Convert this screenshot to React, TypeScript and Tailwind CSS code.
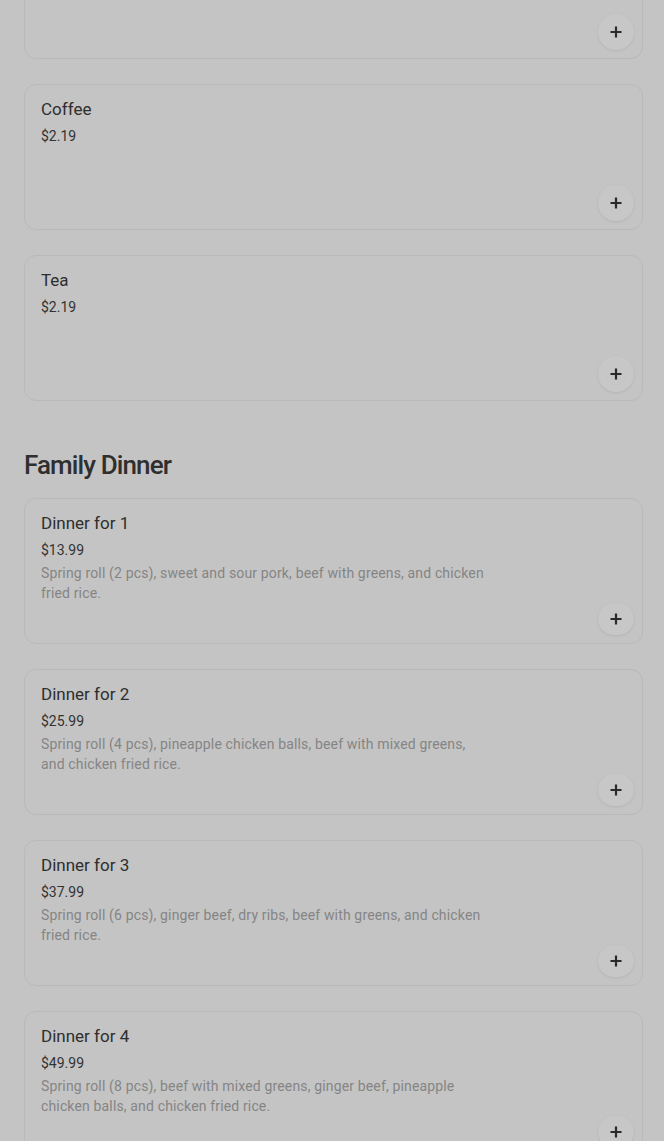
import React from "react";

type Item = { name: string; price: string; desc?: string };

const drinks: Item[] = [
  { name: "", price: "" },
  { name: "Coffee", price: "$2.19" },
  { name: "Tea", price: "$2.19" },
];

const family: Item[] = [
  { name: "Dinner for 1", price: "$13.99", desc: "Spring roll (2 pcs), sweet and sour pork, beef with greens, and chicken fried rice." },
  { name: "Dinner for 2", price: "$25.99", desc: "Spring roll (4 pcs), pineapple chicken balls, beef with mixed greens, and chicken fried rice." },
  { name: "Dinner for 3", price: "$37.99", desc: "Spring roll (6 pcs), ginger beef, dry ribs, beef with greens, and chicken fried rice." },
  { name: "Dinner for 4", price: "$49.99", desc: "Spring roll (8 pcs), beef with mixed greens, ginger beef, pineapple chicken balls, and chicken fried rice." },
];

function Plus() {
  return (
    <svg width="14" height="14" viewBox="0 0 14 14" fill="none">
      <path d="M7 1.5v11M1.5 7h11" stroke="#2a2a2a" strokeWidth="2.2" />
    </svg>
  );
}

function Card({ item }: { item: Item }) {
  return (
    <div className="h-[146px] rounded-[12px] border border-[#b9b9b9] bg-[#c4c4c4] flex flex-col pl-4 pr-[8px] pt-[12px] pb-[8px]">
      {item.name && (
        <>
          <div className="text-[17px] leading-[24px] text-[#2e2e2e] font-normal">{item.name}</div>
          <div className="mt-[5px] text-[14px] leading-[20px] text-[#333333]">{item.price}</div>
        </>
      )}
      {item.desc && (
        <div className="mt-[3px] text-[14px] leading-[20px] text-[#858585] max-w-[448px] tracking-[0.15px]">{item.desc}</div>
      )}
      <div className="mt-auto self-end w-9 h-9 rounded-full bg-[#c7c7c7] shadow-[0_1px_3px_rgba(0,0,0,0.08)] flex items-center justify-center">
        <Plus />
      </div>
    </div>
  );
}

export default function App() {
  return (
    <div className="min-h-[1141px] bg-[#c4c4c4] overflow-hidden" style={{ fontFamily: "Roboto, 'Noto Sans', sans-serif" }}>
      <div className="pl-6 pr-[21px] -mt-[87px] flex flex-col gap-[25px]">
        {drinks.map((d, i) => (
          <Card key={i} item={d} />
        ))}
      </div>
      <h2 className="px-6 mt-[48px] text-[26px] leading-[32px] font-medium text-[#2f2f2f] tracking-[-0.9px]">
        Family Dinner
      </h2>
      <div className="pl-6 pr-[21px] mt-[17px] flex flex-col gap-[25px] pb-10">
        {family.map((d) => (
          <Card key={d.name} item={d} />
        ))}
      </div>
    </div>
  );
}
